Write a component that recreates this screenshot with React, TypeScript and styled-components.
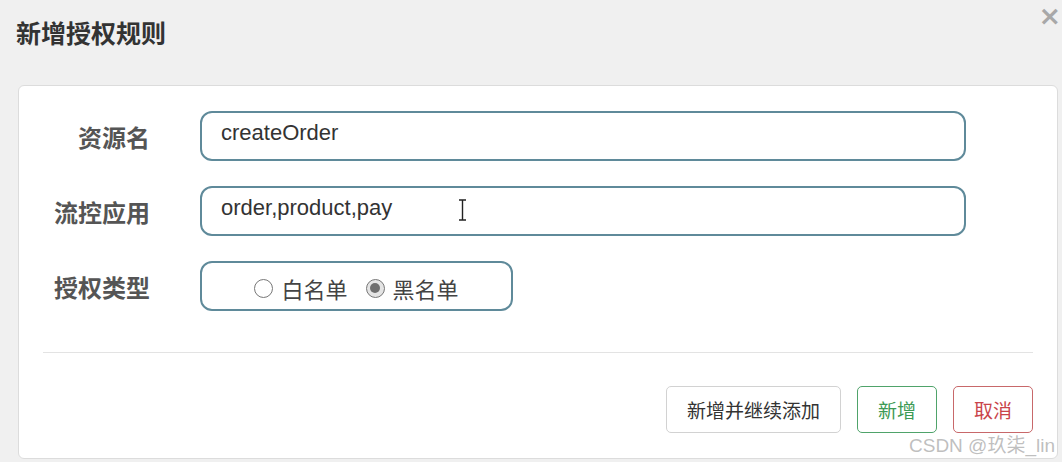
import React from 'react';
import styled, { createGlobalStyle } from 'styled-components';

const GlobalStyle = createGlobalStyle`
  html, body {
    margin: 0;
    padding: 0;
    background: #f0f0f0;
    font-family: "Liberation Sans", "Noto Sans CJK SC", sans-serif;
  }
`;

const Page = styled.div`
  position: relative;
  width: 1062px;
  height: 462px;
  overflow: hidden;
  background: #f0f0f0;
`;

const Header = styled.div`
  display: flex;
  justify-content: space-between;
  align-items: flex-start;
  height: 85px;
  padding-left: 16px;
  box-sizing: border-box;
`;

const Title = styled.h4`
  margin: 17px 0 0;
  font-size: 25px;
  line-height: 31px;
  font-weight: bold;
  color: #333;
  font-family: "Noto Sans CJK SC", sans-serif;
`;

const Close = styled.span`
  margin: 1px 1px 0 0;
  font-size: 27px;
  line-height: 30px;
  font-weight: bold;
  color: #a8a8a8;
  font-family: "DejaVu Sans", sans-serif;
`;

const Card = styled.div`
  margin: 0 4px 0 18px;
  height: 374px;
  box-sizing: border-box;
  background: #fff;
  border: 1px solid #dcdcdc;
  border-radius: 6px;
  padding: 25px 24px 0 24px;
`;

const Form = styled.div`
  display: grid;
  grid-template-columns: 107px 766px;
  column-gap: 50px;
  row-gap: 25px;
  align-items: center;
`;

const Label = styled.label`
  text-align: right;
  font-size: 24px;
  font-weight: bold;
  color: #555;
  font-family: "Noto Sans CJK SC", sans-serif;
`;

const Field = styled.div<{ $w?: number }>`
  position: relative;
  display: flex;
  align-items: center;
  justify-content: ${(p) => (p.$w ? 'center' : 'flex-start')};
  gap: 18px;
  width: ${(p) => (p.$w ? `${p.$w}px` : '100%')};
  height: 50px;
  box-sizing: border-box;
  padding: ${(p) => (p.$w ? '0' : '0 19px')};
  border: 2px solid #5f8a9a;
  border-radius: 12px;
  font-size: 22px;
  color: #333;
`;

const Value = styled.span`
  margin-top: -6px;
`;

const Caret = styled.svg`
  position: absolute;
  left: 256px;
  top: 11px;
`;

const RadioItem = styled.span`
  display: flex;
  align-items: center;
  gap: 8px;
  font-family: "Noto Sans CJK SC", sans-serif;
  font-size: 22px;
  color: #444;
  margin-top: 4px;
`;

const RadioDot = styled.span<{ $on?: boolean }>`
  display: inline-flex;
  align-items: center;
  justify-content: center;
  width: 19px;
  height: 19px;
  box-sizing: border-box;
  border-radius: 50%;
  border: 1.5px solid #777;
  background: ${(p) => (p.$on ? '#e4e4e4' : '#fff')};
  &::after {
    content: '';
    display: ${(p) => (p.$on ? 'block' : 'none')};
    width: 10px;
    height: 10px;
    border-radius: 50%;
    background: #6e6e6e;
  }
`;

const Divider = styled.hr`
  margin: 41px 0 0;
  border: 0;
  border-top: 1px solid #e3e3e3;
`;

const Footer = styled.div`
  display: flex;
  justify-content: flex-end;
  gap: 16px;
  margin-top: 33px;
`;

const Button = styled.button<{ $tone?: 'ok' | 'cancel' }>`
  height: 47px;
  padding: 0 20px;
  background: #fff;
  border-radius: 5px;
  font-family: "Noto Sans CJK SC", sans-serif;
  font-size: 19px;
  border: 1.5px solid
    ${(p) => (p.$tone === 'ok' ? '#4fa36a' : p.$tone === 'cancel' ? '#c8686a' : '#d2d2d2')};
  color: ${(p) => (p.$tone === 'ok' ? '#3d9a55' : p.$tone === 'cancel' ? '#c9444a' : '#333')};
`;

const Watermark = styled.span`
  position: absolute;
  left: 909px;
  top: 430px;
  font-size: 19px;
  color: rgba(170, 170, 170, 0.75);
  white-space: nowrap;
`;

export default function App() {
  return (
    <Page>
      <GlobalStyle />
      <Header>
        <Title>新增授权规则</Title>
        <Close>×</Close>
      </Header>
      <Card>
        <Form>
          <Label>资源名</Label>
          <Field>
            <Value>createOrder</Value>
          </Field>
          <Label>流控应用</Label>
          <Field>
            <Value>order,product,pay</Value>
            <Caret width="9" height="22" viewBox="0 0 9 22">
              <path d="M1 1h7M4.5 1v20M1 21h7" stroke="#222" strokeWidth="1.4" fill="none" />
            </Caret>
          </Field>
          <Label>授权类型</Label>
          <Field $w={313}>
            <RadioItem>
              <RadioDot />
              白名单
            </RadioItem>
            <RadioItem>
              <RadioDot $on />
              黑名单
            </RadioItem>
          </Field>
        </Form>
        <Divider />
        <Footer>
          <Button>新增并继续添加</Button>
          <Button $tone="ok">新增</Button>
          <Button $tone="cancel">取消</Button>
        </Footer>
      </Card>
      <Watermark>CSDN @玖柒_lin</Watermark>
    </Page>
  );
}
